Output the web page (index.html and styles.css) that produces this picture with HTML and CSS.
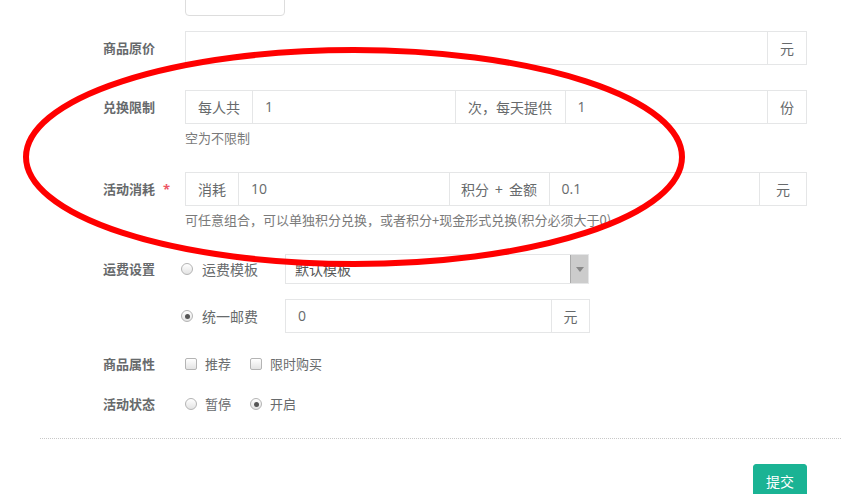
FILE: index.html
```html
<!DOCTYPE html>
<html lang="zh-CN">
<head>
<meta charset="utf-8">
<title>活动商品</title>
<link rel="stylesheet" href="styles.css">
</head>
<body>
<div class="page">
  <div class="top-box"></div>

  <div class="form-row r-price">
    <div class="lbl">商品原价</div><div class="req"></div>
    <div class="field">
      <div class="igroup">
        <div class="inp"></div>
        <div class="addon w40">元</div>
      </div>
    </div>
  </div>

  <div class="form-row r-limit">
    <div class="lbl">兑换限制</div><div class="req"></div>
    <div class="field">
      <div class="igroup">
        <div class="addon w68">每人共</div>
        <div class="inp">1</div>
        <div class="addon w111">次，每天提供</div>
        <div class="inp">1</div>
        <div class="addon w40">份</div>
      </div>
      <div class="help">空为不限制</div>
    </div>
  </div>

  <div class="form-row r-cost">
    <div class="lbl">活动消耗</div><div class="req"><span class="star">*</span></div>
    <div class="field">
      <div class="igroup">
        <div class="addon w54">消耗</div>
        <div class="inp">10</div>
        <div class="addon w101 spaced">积分 + 金额</div>
        <div class="inp">0.1</div>
        <div class="addon w48">元</div>
      </div>
      <div class="help">可任意组合，可以单独积分兑换，或者积分+现金形式兑换(积分必须大于0)</div>
    </div>
  </div>

  <div class="form-row r-ship">
    <div class="lbl lbl30">运费设置</div><div class="req"></div>
    <div class="field">
      <div class="ship-line">
        <label class="opt opt-ship"><span class="radio"></span><span class="opt-text">运费模板</span></label>
        <div class="select">
          <span class="select-text">默认模板</span>
          <span class="select-arrow"><span class="tri"></span></span>
        </div>
      </div>
      <div class="ship-line ship-line2">
        <label class="opt opt-ship"><span class="radio checked"></span><span class="opt-text">统一邮费</span></label>
        <div class="igroup ship-group">
          <div class="inp">0</div>
          <div class="addon w39">元</div>
        </div>
      </div>
    </div>
  </div>

  <div class="form-row r-attr">
    <div class="lbl lbl20">商品属性</div><div class="req"></div>
    <div class="field opts">
      <label class="opt"><span class="checkbox"></span><span class="opt-text sm">推荐</span></label>
      <label class="opt"><span class="checkbox"></span><span class="opt-text sm">限时购买</span></label>
    </div>
  </div>

  <div class="form-row r-status">
    <div class="lbl lbl20">活动状态</div><div class="req"></div>
    <div class="field opts">
      <label class="opt"><span class="radio"></span><span class="opt-text sm">暂停</span></label>
      <label class="opt"><span class="radio checked"></span><span class="opt-text sm">开启</span></label>
    </div>
  </div>

  <div class="divider"></div>

  <div class="actions">
    <button class="btn-submit" type="button">提交</button>
  </div>

  <svg class="mark" width="841" height="494" viewBox="0 0 841 494">
    <ellipse cx="354" cy="157" rx="328" ry="107" fill="none" stroke="#ff0000" stroke-width="6"/>
  </svg>
</div>
</body>
</html>
```
FILE: styles.css
```css
html, body {
  margin: 0;
  padding: 0;
  background: #ffffff;
}
body {
  font-family: "Open Sans", "Noto Sans CJK SC", sans-serif;
  color: #676a6c;
  overflow: hidden;
}
.page {
  position: relative;
  width: 841px;
  height: 494px;
  overflow: hidden;
}
.top-box {
  margin-left: 185px;
  width: 100px;
  height: 35px;
  margin-top: -19px;
  box-sizing: border-box;
  border: 1px solid #dddddd;
  border-radius: 4px;
}
.form-row {
  display: grid;
  grid-template-columns: 155px 30px 622px;
}
.lbl {
  text-align: right;
  font-family: "Noto Sans CJK SC", sans-serif;
  font-weight: bold;
  font-size: 13px;
  line-height: 34px;
  color: #676a6c;
}
.lbl30 { line-height: 30px; }
.lbl20 { line-height: 20px; }
.req { position: relative; }
.star {
  position: absolute;
  left: 8px;
  top: 0;
  color: #ed5565;
  font-size: 13px;
  line-height: 34px;
  font-weight: bold;
}
.r-price { margin-top: 15px; }
.r-limit { margin-top: 25px; }
.r-cost { margin-top: 25px; }
.r-ship { margin-top: 25px; }
.r-attr { margin-top: 21px; }
.r-status { margin-top: 20px; }

.igroup {
  display: flex;
  height: 34px;
}
.igroup > div {
  box-sizing: border-box;
  height: 34px;
  border: 1px solid #e5e6e7;
  font-size: 14px;
  line-height: 32px;
  color: #676a6c;
}
.igroup > div + div { margin-left: -1px; }
.inp {
  flex: 1;
  padding: 0 12px;
  font-family: "Open Sans", "Noto Sans CJK SC", sans-serif;
}
.addon {
  flex: none;
  text-align: center;
  font-family: "Noto Sans CJK SC", sans-serif;
  white-space: nowrap;
  color: #777777;
}
.spaced { word-spacing: 3px; }
.w39 { width: 39px; }
.w40 { width: 40px; }
.w48 { width: 48px; }
.w54 { width: 54px; }
.w68 { width: 68px; }
.w101 { width: 101px; }
.w111 { width: 111px; }

.help {
  margin-top: 5px;
  font-family: "Noto Sans CJK SC", sans-serif;
  font-size: 13px;
  line-height: 18px;
  color: #7a7a7a;
}

.ship-line {
  display: flex;
  align-items: center;
  height: 30px;
}
.ship-line2 {
  margin-top: 15px;
  height: 34px;
}
.opt {
  display: inline-flex;
  align-items: center;
  font-family: "Noto Sans CJK SC", sans-serif;
  color: #676a6c;
}
.opt-ship {
  width: 104px;
  margin-left: -4px;
  flex: none;
}
.opt-text {
  margin-left: 9px;
  font-size: 14px;
  line-height: 20px;
}
.opt-text.sm {
  margin-left: 8px;
  font-size: 13px;
}
.radio, .checkbox {
  display: inline-block;
  width: 12px;
  height: 12px;
  box-sizing: border-box;
  border: 1px solid #b4b4b4;
  background: linear-gradient(#ffffff, #e3e3e3);
  position: relative;
  flex: none;
}
.radio { border-radius: 50%; }
.checkbox { border-radius: 2px; }
.radio.checked::after {
  content: "";
  position: absolute;
  left: 2.5px;
  top: 2.5px;
  width: 5px;
  height: 5px;
  border-radius: 50%;
  background: #555555;
}
.select {
  position: relative;
  width: 304px;
  height: 30px;
  box-sizing: border-box;
  border: 1px solid #e5e6e7;
  display: flex;
  align-items: center;
}
.select-text {
  padding-left: 9px;
  font-family: "Noto Sans CJK SC", sans-serif;
  font-size: 14px;
  color: #555555;
}
.select-arrow {
  position: absolute;
  right: 0;
  top: 0;
  width: 18px;
  height: 28px;
  background: #cccccc;
  border-left: 1px solid #aaaaaa;
  box-sizing: border-box;
  display: flex;
  align-items: center;
  justify-content: center;
}
.tri {
  width: 0;
  height: 0;
  border-left: 4px solid transparent;
  border-right: 4px solid transparent;
  border-top: 5px solid #888888;
}
.ship-group { width: 305px; }

.opts {
  display: flex;
  align-items: center;
  gap: 19px;
  height: 20px;
}

.divider {
  margin-top: 24px;
  margin-left: 40px;
  border-top: 1px dotted #c8c8c8;
}
.actions {
  margin-top: 25px;
  padding-left: 753px;
}
.btn-submit {
  width: 54px;
  height: 34px;
  padding: 0;
  border: 1px solid #1ab394;
  border-radius: 3px;
  background: #1ab394;
  color: #ffffff;
  font-family: "Noto Sans CJK SC", sans-serif;
  font-size: 14px;
  line-height: 32px;
}
.mark {
  position: absolute;
  left: 0;
  top: 0;
  pointer-events: none;
}
```
